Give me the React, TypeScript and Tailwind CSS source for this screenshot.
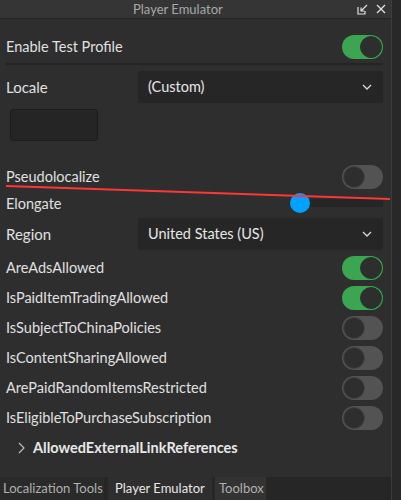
import React from "react";

const font = { fontFamily: "Lato, 'Noto Sans', sans-serif" };

function Toggle({ on }: { on: boolean }) {
  return on ? (
    <div className="w-[41px] h-[24px] rounded-full bg-[#3ba552] flex items-center justify-end pr-[1px]">
      <div className="w-[22px] h-[22px] rounded-full bg-[#2e2e2e] border border-[#1f3a25]" />
    </div>
  ) : (
    <div className="w-[41px] h-[24px] rounded-full bg-[#535353] flex items-center justify-start pl-[1px]">
      <div className="w-[22px] h-[22px] rounded-full bg-[#2e2e2e] border border-[#444]" />
    </div>
  );
}

function Chevron() {
  return (
    <svg width="10" height="6" viewBox="0 0 10 6" className="mr-[11px]">
      <path d="M1 1 L5 5 L9 1" fill="none" stroke="#d8d8d8" strokeWidth="1.3" />
    </svg>
  );
}

function Dropdown({ value }: { value: string }) {
  return (
    <div className="w-[245px] h-[32px] bg-[#262626] rounded-[2px] flex items-center justify-between pl-[10px]">
      <span className="text-[14.5px] text-[#e6e6e6]">{value}</span>
      <Chevron />
    </div>
  );
}

export default function App() {
  const toggles: [string, boolean][] = [
    ["AreAdsAllowed", true],
    ["IsPaidItemTradingAllowed", true],
    ["IsSubjectToChinaPolicies", false],
    ["IsContentSharingAllowed", false],
    ["ArePaidRandomItemsRestricted", false],
    ["IsEligibleToPurchaseSubscription", false],
  ];
  return (
    <div className="w-[401px] h-[500px] bg-[#2e2e2e] relative flex overflow-hidden text-[#e0e0e0]" style={font}>
      <div className="w-[391px] flex flex-col h-full">
        {/* Title bar */}
        <div className="h-[19px] bg-[#353535] border-b border-[#262626] flex items-center relative shrink-0">
          <span className="absolute left-[133px] top-[0px] text-[13px] leading-[18px] text-[#a8a8a8] whitespace-nowrap">Player Emulator</span>
          <div className="ml-auto flex items-center gap-[8px] pr-[5px]">
            <svg width="11" height="11" viewBox="0 0 11 11">
              <path d="M1 3 V10 H8 V7" fill="none" stroke="#e0e0e0" strokeWidth="1.2" />
              <path d="M10 1 L4.5 6.5 M4 3.5 V7 H7.5" fill="none" stroke="#e0e0e0" strokeWidth="1.2" />
            </svg>
            <svg width="10" height="10" viewBox="0 0 10 10">
              <path d="M1 1 L9 9 M9 1 L1 9" stroke="#e0e0e0" strokeWidth="1.3" />
            </svg>
          </div>
        </div>

        <div className="flex flex-col pl-[6px] pr-[8px]">
          <div className="h-[44px] flex items-center justify-between pt-[11px]">
            <span className="text-[14.5px]">Enable Test Profile</span>
            <Toggle on />
          </div>
          <div className="h-[2px] bg-[#242424]" />
          <div className="h-[6px]" />
          <div className="h-[32px] flex items-center justify-between">
            <span className="text-[15px]">Locale</span>
            <Dropdown value="(Custom)" />
          </div>
          <div className="h-[6px]" />
          <div className="ml-[4px] w-[88px] h-[32px] bg-[#252525] border border-[#1c1c1c] rounded-[3px]" />
          <div className="h-[24px]" />
          <div className="h-[24px] flex items-center justify-between">
            <span className="text-[14.5px]">Pseudolocalize</span>
            <Toggle on={false} />
          </div>
          <div className="h-[26px] flex items-center justify-between">
            <span className="text-[14.5px] relative top-[2px]">Elongate</span>
            <div className="relative w-[93px] h-[8px] bg-[#262626] mt-[2px]">
              <div className="absolute left-0 top-[-6px] w-[20px] h-[20px] rounded-full bg-[#00a2ff]" />
            </div>
          </div>
          <div className="h-[3px]" />
          <div className="h-[32px] flex items-center justify-between">
            <span className="text-[15px]">Region</span>
            <Dropdown value="United States (US)" />
          </div>
          <div className="h-[3px]" />
          {toggles.map(([label, on]) => (
            <div key={label} className="h-[30px] flex items-center justify-between">
              <span className="text-[14.5px]">{label}</span>
              <Toggle on={on} />
            </div>
          ))}
          <div className="h-[30px] flex items-center pl-[12px] gap-[8px]">
            <svg width="7" height="12" viewBox="0 0 7 12">
              <path d="M1 1 L6 6 L1 11" fill="none" stroke="#bdbdbd" strokeWidth="1.2" />
            </svg>
            <span className="text-[14.5px] font-bold text-[#e8e8e8]">AllowedExternalLinkReferences</span>
          </div>
        </div>

        <div className="mt-auto h-[23px] bg-[#262626] flex items-end text-[13px] whitespace-nowrap">
          <div className="h-[23px] px-[3px] flex items-center text-[#b0b0b0] bg-[#2a2a2a] w-[104px]">Localization Tools</div>
          <div className="h-[23px] ml-[4px] px-[7px] flex items-center text-[#e8e8e8] bg-[#2e2e2e] w-[104px]">Player Emulator</div>
          <div className="h-[23px] ml-[3px] px-[4px] flex items-center text-[#b0b0b0] bg-[#333333] w-[51px]">Toolbox</div>
        </div>
      </div>
      <div className="w-[10px] h-full bg-[#282828] border-l border-[#3c3c3c]" />

      <svg className="absolute left-0 top-0 pointer-events-none" width="401" height="500">
        <line x1="6" y1="186" x2="390" y2="199" stroke="#ff3636" strokeWidth="2" />
      </svg>
    </div>
  );
}
